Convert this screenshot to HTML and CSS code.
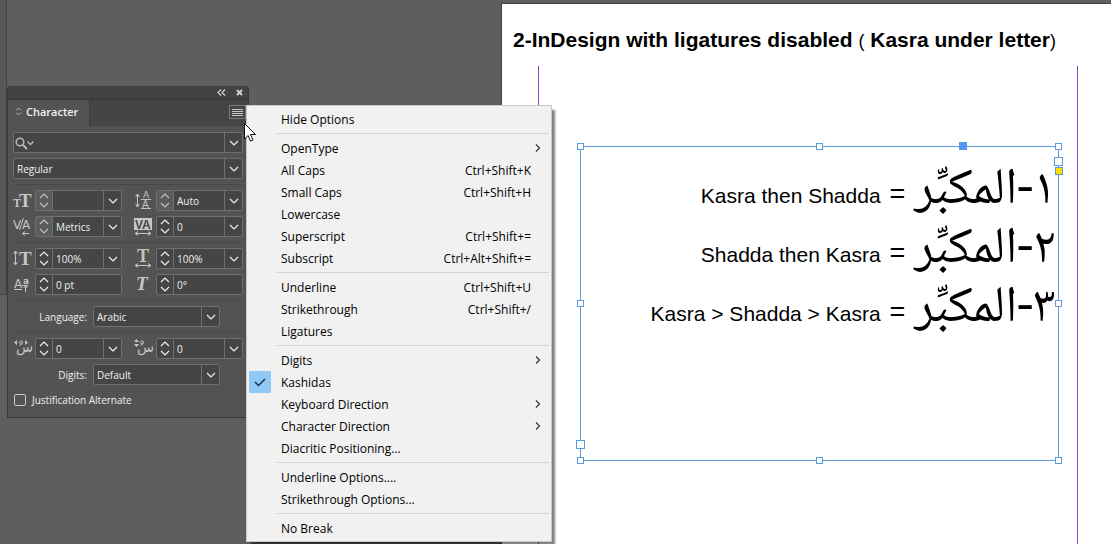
FILE: index.html
```html
<!DOCTYPE html>
<html lang="en">
<head>
<meta charset="utf-8">
<title>Character panel</title>
<link rel="stylesheet" href="styles.css">
</head>
<body>
<svg class="defs" aria-hidden="true">
  <symbol id="down" viewBox="0 0 10 6"><path d="M1 1l4 4 4-4" fill="none" stroke="currentColor" stroke-width="1.200"/></symbol>
  <symbol id="up" viewBox="0 0 10 6"><path d="M1 5l4-4 4 4" fill="none" stroke="currentColor" stroke-width="1.200"/></symbol>
  <symbol id="right" viewBox="0 0 6 8"><path d="M1 0.500l3.500 3.500-3.500 3.500" fill="none" stroke="currentColor" stroke-width="1.200"/></symbol>
</svg>

<main class="workspace">
  <div class="dock-edge"></div>

  <article class="page">
    <h1 class="page-title">2-InDesign with ligatures disabled <span class="note"><span class="paren">(</span> Kasra under letter<span class="paren">)</span></span></h1>
    <div class="margins">
      <div class="frame">
        <p class="line"><span>Kasra then Shadda</span><span class="eq">=</span><bdi class="arabic" lang="ar" dir="rtl">١-المكبِّر</bdi></p>
        <p class="line"><span>Shadda then Kasra</span><span class="eq">=</span><bdi class="arabic" lang="ar" dir="rtl">٢-المكبِّر</bdi></p>
        <p class="line"><span>Kasra &gt; Shadda &gt; Kasra</span><span class="eq">=</span><bdi class="arabic" lang="ar" dir="rtl">٣-المكبِّر</bdi></p>
        <i class="handle top start"></i><i class="handle top mid"></i><i class="handle top end"></i>
        <i class="handle center start"></i><i class="handle center end"></i>
        <i class="handle bottom start"></i><i class="handle bottom mid"></i><i class="handle bottom end"></i>
        <i class="handle anchor"></i><i class="handle port in"></i><i class="handle color"></i><i class="handle port out"></i>
      </div>
    </div>
  </article>

  <section class="panel" aria-label="Character">
    <header class="titlebar">
      <button class="plain" aria-label="Collapse"><svg width="9" height="7" viewBox="0 0 9 7"><path d="M4 .5l-3 3 3 3M8 .5l-3 3 3 3" fill="none" stroke="currentColor" stroke-width="1.300"/></svg></button>
      <button class="plain" aria-label="Close"><svg width="7" height="7" viewBox="0 0 7 7"><path d="M1 1l5 5M6 1l-5 5" stroke="currentColor" stroke-width="2"/></svg></button>
    </header>
    <div class="tabs">
      <button class="tab"><svg width="7" height="9" viewBox="0 0 7 9"><path d="M1 3.500l2.500-2.500 2.500 2.500M1 5.500l2.500 2.500 2.500-2.500" fill="none" stroke="#b5b5b5"/></svg>Character</button>
      <button class="plain menu-button" aria-label="Panel menu"><svg width="11" height="8" viewBox="0 0 11 8"><path d="M0 .5h11M0 2.500h11M0 4.500h11M0 6.500h11" stroke="#c4c4c4"/></svg></button>
    </div>
    <div class="body">
      <div class="field">
        <svg class="search" width="20" height="13" viewBox="0 0 20 13"><circle cx="5" cy="5" r="3.800" fill="none" stroke="#bbb" stroke-width="1.500"/><path d="M8 8l4 4" stroke="#bbb" stroke-width="2"/><path d="M12.500 4.500l3 3 3-3" fill="none" stroke="#bbb" stroke-width="1.500"/></svg>
        <input type="text" aria-label="Font family">
        <button class="drop" aria-label="Font families"><svg><use href="#down"/></svg></button>
      </div>
      <div class="field"><select aria-label="Font style"><option>Regular</option></select><span class="drop"><svg><use href="#down"/></svg></span></div>
      <hr>
      <div class="pair">
        <div class="control">
          <svg class="icon" viewBox="0 0 22 20"><text x="0" y="17" font-size="12">T</text><text x="6" y="17" font-size="19">T</text></svg>
          <span class="spin off"><button aria-label="Increase font size"><svg><use href="#up"/></svg></button><button aria-label="Decrease font size"><svg><use href="#down"/></svg></button></span>
          <div class="field"><input type="text" aria-label="Font size"><button class="drop" aria-label="Font sizes"><svg><use href="#down"/></svg></button></div>
        </div>
        <div class="control">
          <svg class="icon" viewBox="0 0 22 20"><path d="M3.500 5v11M1.500 7l2-3 2 3M1.500 14l2 3 2-3M7 9.500h10M7 18.500h10"/><text class="sans" x="9" y="8" font-size="9">A</text><text class="sans" x="8" y="18" font-size="10">A</text></svg>
          <span class="spin off"><button aria-label="Increase leading"><svg><use href="#up"/></svg></button><button aria-label="Decrease leading"><svg><use href="#down"/></svg></button></span>
          <div class="field"><input type="text" value="Auto" aria-label="Leading"><button class="drop" aria-label="Leading values"><svg><use href="#down"/></svg></button></div>
        </div>
      </div>
      <div class="pair">
        <div class="control">
          <svg class="icon" viewBox="0 0 22 20"><path d="M10.500 2l-4 12M10 17.500h6M12 15.500l-2.500 2 2.500 2"/><text class="sans" x="0" y="13" font-size="12">V</text><text class="sans" x="9" y="13" font-size="12">A</text></svg>
          <span class="spin off"><button aria-label="Increase kerning"><svg><use href="#up"/></svg></button><button aria-label="Decrease kerning"><svg><use href="#down"/></svg></button></span>
          <div class="field"><input type="text" value="Metrics" aria-label="Kerning"><button class="drop" aria-label="Kerning values"><svg><use href="#down"/></svg></button></div>
        </div>
        <div class="control">
          <svg class="icon" viewBox="0 0 22 20"><rect x="0" y="2" width="18" height="12" fill="#c8c8c8"/><text class="cut" x="1" y="13" font-size="12">VA</text><path d="M1 17.500h16M4 15.500l-3 2 3 2M14 15.500l3 2-3 2"/></svg>
          <span class="spin"><button aria-label="Increase tracking"><svg><use href="#up"/></svg></button><button aria-label="Decrease tracking"><svg><use href="#down"/></svg></button></span>
          <div class="field"><input type="text" value="0" aria-label="Tracking"><button class="drop" aria-label="Tracking values"><svg><use href="#down"/></svg></button></div>
        </div>
      </div>
      <hr>
      <div class="pair">
        <div class="control">
          <svg class="icon" viewBox="0 0 22 20"><path d="M2.500 4v12M.5 6l2-3 2 3M.5 14l2 3 2-3"/><text x="6" y="17" font-size="19">T</text></svg>
          <span class="spin"><button aria-label="Increase vertical scale"><svg><use href="#up"/></svg></button><button aria-label="Decrease vertical scale"><svg><use href="#down"/></svg></button></span>
          <div class="field"><input type="text" value="100%" aria-label="Vertical scale"><button class="drop" aria-label="Vertical scales"><svg><use href="#down"/></svg></button></div>
        </div>
        <div class="control">
          <svg class="icon" viewBox="0 0 22 20"><text x="3" y="14" font-size="18">T</text><path d="M2 17.500h14M4 15.500l-3 2 3 2M14 15.500l3 2-3 2"/></svg>
          <span class="spin"><button aria-label="Increase horizontal scale"><svg><use href="#up"/></svg></button><button aria-label="Decrease horizontal scale"><svg><use href="#down"/></svg></button></span>
          <div class="field"><input type="text" value="100%" aria-label="Horizontal scale"><button class="drop" aria-label="Horizontal scales"><svg><use href="#down"/></svg></button></div>
        </div>
      </div>
      <div class="pair">
        <div class="control">
          <svg class="icon" viewBox="0 0 22 20"><text class="sans" x="1" y="14" font-size="12">A</text><text class="sans heavy" x="10" y="10" font-size="9">a</text><path d="M1 15.500h8M9 11.500h6M12.500 11v7M10.500 14l2-2 2 2"/></svg>
          <span class="spin"><button aria-label="Increase baseline shift"><svg><use href="#up"/></svg></button><button aria-label="Decrease baseline shift"><svg><use href="#down"/></svg></button></span>
          <div class="field"><input type="text" value="0 pt" aria-label="Baseline shift"></div>
        </div>
        <div class="control">
          <svg class="icon" viewBox="0 0 22 20"><text x="2" y="16" font-size="19" font-style="italic">T</text></svg>
          <span class="spin"><button aria-label="Increase skew"><svg><use href="#up"/></svg></button><button aria-label="Decrease skew"><svg><use href="#down"/></svg></button></span>
          <div class="field"><input type="text" value="0°" aria-label="Skew"></div>
        </div>
      </div>
      <hr>
      <div class="labelled"><label for="language">Language:</label><div class="field"><select id="language"><option>Arabic</option></select><span class="drop"><svg><use href="#down"/></svg></span></div></div>
      <hr>
      <div class="pair">
        <div class="control">
          <svg class="icon" viewBox="0 0 22 20"><text class="sans" x="3" y="14" font-size="14">س</text><path class="solid" d="M4 2v5l-3-2.500zM12 2v5l3-2.500z"/><path d="M9 5.500a1.500 1.500 0 1 1 .5-1.500q0 2.500-3 3.500"/></svg>
          <span class="spin"><button aria-label="Increase horizontal diacritic position"><svg><use href="#up"/></svg></button><button aria-label="Decrease horizontal diacritic position"><svg><use href="#down"/></svg></button></span>
          <div class="field"><input type="text" value="0" aria-label="Horizontal diacritic position"><button class="drop" aria-label="Horizontal positions"><svg><use href="#down"/></svg></button></div>
        </div>
        <div class="control">
          <svg class="icon" viewBox="0 0 22 20"><text class="sans" x="3" y="14" font-size="14">س</text><path class="solid" d="M0 4h5l-2.500-3zM0 6h5l-2.500 3z"/><path d="M9 5.500a1.500 1.500 0 1 1 .5-1.500q0 2.500-3 3.500"/></svg>
          <span class="spin"><button aria-label="Increase vertical diacritic position"><svg><use href="#up"/></svg></button><button aria-label="Decrease vertical diacritic position"><svg><use href="#down"/></svg></button></span>
          <div class="field"><input type="text" value="0" aria-label="Vertical diacritic position"><button class="drop" aria-label="Vertical positions"><svg><use href="#down"/></svg></button></div>
        </div>
      </div>
      <div class="labelled"><label for="digits">Digits:</label><div class="field"><select id="digits"><option>Default</option></select><span class="drop"><svg><use href="#down"/></svg></span></div></div>
      <label class="check"><input type="checkbox">Justification Alternate</label>
    </div>
  </section>

  <div class="menu" role="menu">
    <button class="item" role="menuitem">Hide Options</button>
    <hr>
    <button class="item" role="menuitem">OpenType<svg class="more"><use href="#right"/></svg></button>
    <button class="item" role="menuitem">All Caps<kbd>Ctrl+Shift+K</kbd></button>
    <button class="item" role="menuitem">Small Caps<kbd>Ctrl+Shift+H</kbd></button>
    <button class="item" role="menuitem">Lowercase</button>
    <button class="item" role="menuitem">Superscript<kbd>Ctrl+Shift+=</kbd></button>
    <button class="item" role="menuitem">Subscript<kbd>Ctrl+Alt+Shift+=</kbd></button>
    <hr>
    <button class="item" role="menuitem">Underline<kbd>Ctrl+Shift+U</kbd></button>
    <button class="item" role="menuitem">Strikethrough<kbd>Ctrl+Shift+/</kbd></button>
    <button class="item" role="menuitem">Ligatures</button>
    <hr>
    <button class="item" role="menuitem">Digits<svg class="more"><use href="#right"/></svg></button>
    <button class="item checked" role="menuitemcheckbox" aria-checked="true"><span class="tick"><svg width="12" height="9" viewBox="0 0 12 9"><path d="M1 4l3.500 3.500 6.500-6.500" fill="none" stroke="#234" stroke-width="1.500"/></svg></span>Kashidas</button>
    <button class="item" role="menuitem">Keyboard Direction<svg class="more"><use href="#right"/></svg></button>
    <button class="item" role="menuitem">Character Direction<svg class="more"><use href="#right"/></svg></button>
    <button class="item" role="menuitem">Diacritic Positioning...</button>
    <hr>
    <button class="item" role="menuitem">Underline Options....</button>
    <button class="item" role="menuitem">Strikethrough Options...</button>
    <hr>
    <button class="item" role="menuitem">No Break</button>
  </div>

  <svg class="cursor" width="12" height="19" viewBox="0 0 12 19"><path d="M.5.5v15.500l3.500-3.500 2.500 5.500 2.500-1-2.500-5.500h5z" fill="#fff" stroke="#111"/></svg>
</main>
</body>
</html>
```
FILE: styles.css
```css
* { box-sizing: border-box; }

body {
  margin: 0;
  background: #5e5e5e;
  font-family: "Open Sans", "Noto Sans", sans-serif;
  font-size: 10px;
}

button, input, select {
  margin: 0;
  padding: 0;
  border: 0;
  background: none;
  color: inherit;
  font: inherit;
}

hr { margin: 0; border: 0; }
svg { display: block; flex: none; }
.defs { position: absolute; width: 0; height: 0; }

.workspace {
  position: relative;
  display: flex;
  min-height: 100vh;
  padding: 4px 0 0 502px;
  overflow: hidden;
}

.dock-edge {
  position: absolute;
  left: 0;
  top: 0;
  width: 7px;
  height: 295px;
  background: #585858;
  border-right: 1px solid #444;
  border-bottom: 1px solid #444;
}

/* Document page */
.page {
  flex: 1;
  display: flex;
  flex-direction: column;
  background: #fff;
  box-shadow: 0 0 0 1px #444;
  color: #000;
  font-family: "Liberation Sans", Arial, sans-serif;
}

.page-title {
  margin: 0;
  padding: 24px 0 14px 11px;
  font-size: 21px;
  line-height: 24px;
  white-space: nowrap;
}
.paren { font-size: 18px; font-weight: 400; line-height: 1; }

.margins {
  flex: 1;
  margin: 0 33px 0 36px;
  padding: 80px 18px 0 41px;
  border: solid #8f45bd;
  border-width: 0 1px;
}

.frame {
  position: relative;
  min-height: 315px;
  padding: 15px 2px 0 0;
  border: 1px solid #5b9bdc;
}

.line {
  display: flex;
  justify-content: flex-end;
  align-items: baseline;
  gap: 9px;
  height: 59px;
  margin: 0;
  font-size: 21px;
  line-height: 59px;
  white-space: nowrap;
}
.eq { font-size: 27px; }
.arabic { font-family: "Noto Naskh Arabic", "Amiri", "DejaVu Sans", sans-serif; font-size: 51px; }

.handle {
  position: absolute;
  width: 7px;
  height: 7px;
  background: #fff;
  border: 1px solid #5b9bdc;
}
.top { top: -4px; }
.center { top: calc(50% - 4px); }
.bottom { bottom: -4px; }
.start { left: -4px; }
.mid { left: calc(50% - 4px); }
.end { right: -4px; }
.anchor { top: -5px; right: 91px; width: 8px; height: 8px; background: #4f97ff; }
.port { width: 9px; height: 9px; }
.in { top: 10px; right: -5px; }
.out { bottom: 11px; left: -5px; }
.color { top: 20px; right: -5px; width: 8px; height: 8px; background: #ffe000; }

/* Character panel */
.panel {
  position: absolute;
  left: 7px;
  top: 86px;
  width: 242px;
  background: #535353;
  border: 1px solid #3a3a3a;
  border-top: 0;
  border-radius: 3px 3px 0 0;
  color: #f0f0f0;
}

.titlebar {
  display: flex;
  justify-content: flex-end;
  align-items: center;
  gap: 10px;
  height: 13px;
  padding-right: 5px;
  background: #424242;
  border-radius: 3px 3px 0 0;
  color: #d0d0d0;
}

.tabs {
  display: flex;
  justify-content: space-between;
  height: 27px;
  background: #454545;
  border-top: 1px solid #383838;
}
.tab {
  display: flex;
  align-items: center;
  gap: 4px;
  padding: 0 11px 3px 7px;
  background: #535353;
  border-right: 1px solid #3c3c3c;
  font-size: 11px;
  font-weight: 600;
}
.menu-button {
  align-self: flex-start;
  width: 17px;
  height: 14px;
  margin: 5px 2px 0 0;
  padding: 1px 2px 0;
  border: 1px solid #777;
}

.body {
  display: flex;
  flex-direction: column;
  gap: 5px;
  padding: 6px 5px 6px 5px;
}
.body hr { height: 1px; background: #484848; }

.field {
  position: relative;
  flex: 1;
  display: flex;
  min-width: 0;
  height: 21px;
  background: #454545;
  border: 1px solid #707070;
  border-radius: 2px;
}
.body > .field { flex: none; }
.field input, .field select {
  flex: 1;
  width: 100%;
  min-width: 0;
  padding: 1px 3px 0;
  line-height: 18px;
  appearance: none;
  outline: 0;
}
.search { margin: 4px 0 0 1px; }
.drop {
  flex: none;
  display: flex;
  align-items: center;
  justify-content: center;
  width: 18px;
  border-left: 1px solid #707070;
  pointer-events: none;
}
.drop svg, .spin svg { width: 10px; height: 6px; }

.pair {
  display: grid;
  grid-template-columns: repeat(2, minmax(0, 1fr));
  gap: 12px;
}
.control { display: flex; }
.control .field { border-radius: 0 2px 2px 0; }
.icon {
  width: 22px;
  height: 20px;
  overflow: visible;
  fill: #c4c4c4;
  font-family: "Liberation Serif", serif;
  font-weight: 700;
}
.icon path { fill: none; stroke: #c4c4c4; }
.icon .solid { fill: #c4c4c4; stroke: none; }
.sans { font-family: "DejaVu Sans", sans-serif; font-weight: 400; }
.sans.heavy { font-weight: 700; }
.icon .cut { fill: #454545; font-family: "Liberation Sans", sans-serif; }

.spin {
  flex: none;
  display: flex;
  flex-direction: column;
  justify-content: space-around;
  width: 18px;
  margin-right: -1px;
  padding: 1px 3px;
  background: #454545;
  border: 1px solid #707070;
  border-radius: 2px 0 0 2px;
}
.spin button { height: 8px; }
.spin.off { background: #5c5c5c; color: #c0c0c0; }

.labelled {
  display: flex;
  align-items: center;
  gap: 6px;
  padding-right: 23px;
}
.labelled label { flex: 1; text-align: right; }
.labelled .field { flex: 0 0 127px; }

.check {
  display: flex;
  align-items: center;
  gap: 6px;
  height: 19px;
  margin-bottom: 2px;
  padding-left: 1px;
}
.check input {
  width: 12px;
  height: 12px;
  appearance: none;
  border: 1px solid #c8c8c8;
  border-radius: 2px;
}

/* Flyout menu */
.menu {
  position: absolute;
  left: 246px;
  top: 105px;
  display: flex;
  flex-direction: column;
  width: 306px;
  padding: 2px;
  background: #f1f1f1;
  border: 1px solid #c8c8c8;
  box-shadow: 4px 4px 2px -1px rgba(0, 0, 0, .5);
  color: #000;
  font-size: 12px;
}
.menu hr { height: 1px; margin: 3px 0 3px 28px; background: #d2d2d2; }
.item {
  position: relative;
  display: flex;
  align-items: center;
  justify-content: space-between;
  height: 22px;
  padding: 0 18px 0 32px;
  text-align: left;
}
.item kbd { font: inherit; }
.more { width: 6px; height: 8px; margin-right: -10px; color: #333; }
.tick {
  position: absolute;
  left: 0;
  top: 0;
  display: grid;
  place-items: center;
  width: 22px;
  height: 22px;
  background: #90c8f6;
}

.cursor { position: absolute; left: 244px; top: 123px; }
```
